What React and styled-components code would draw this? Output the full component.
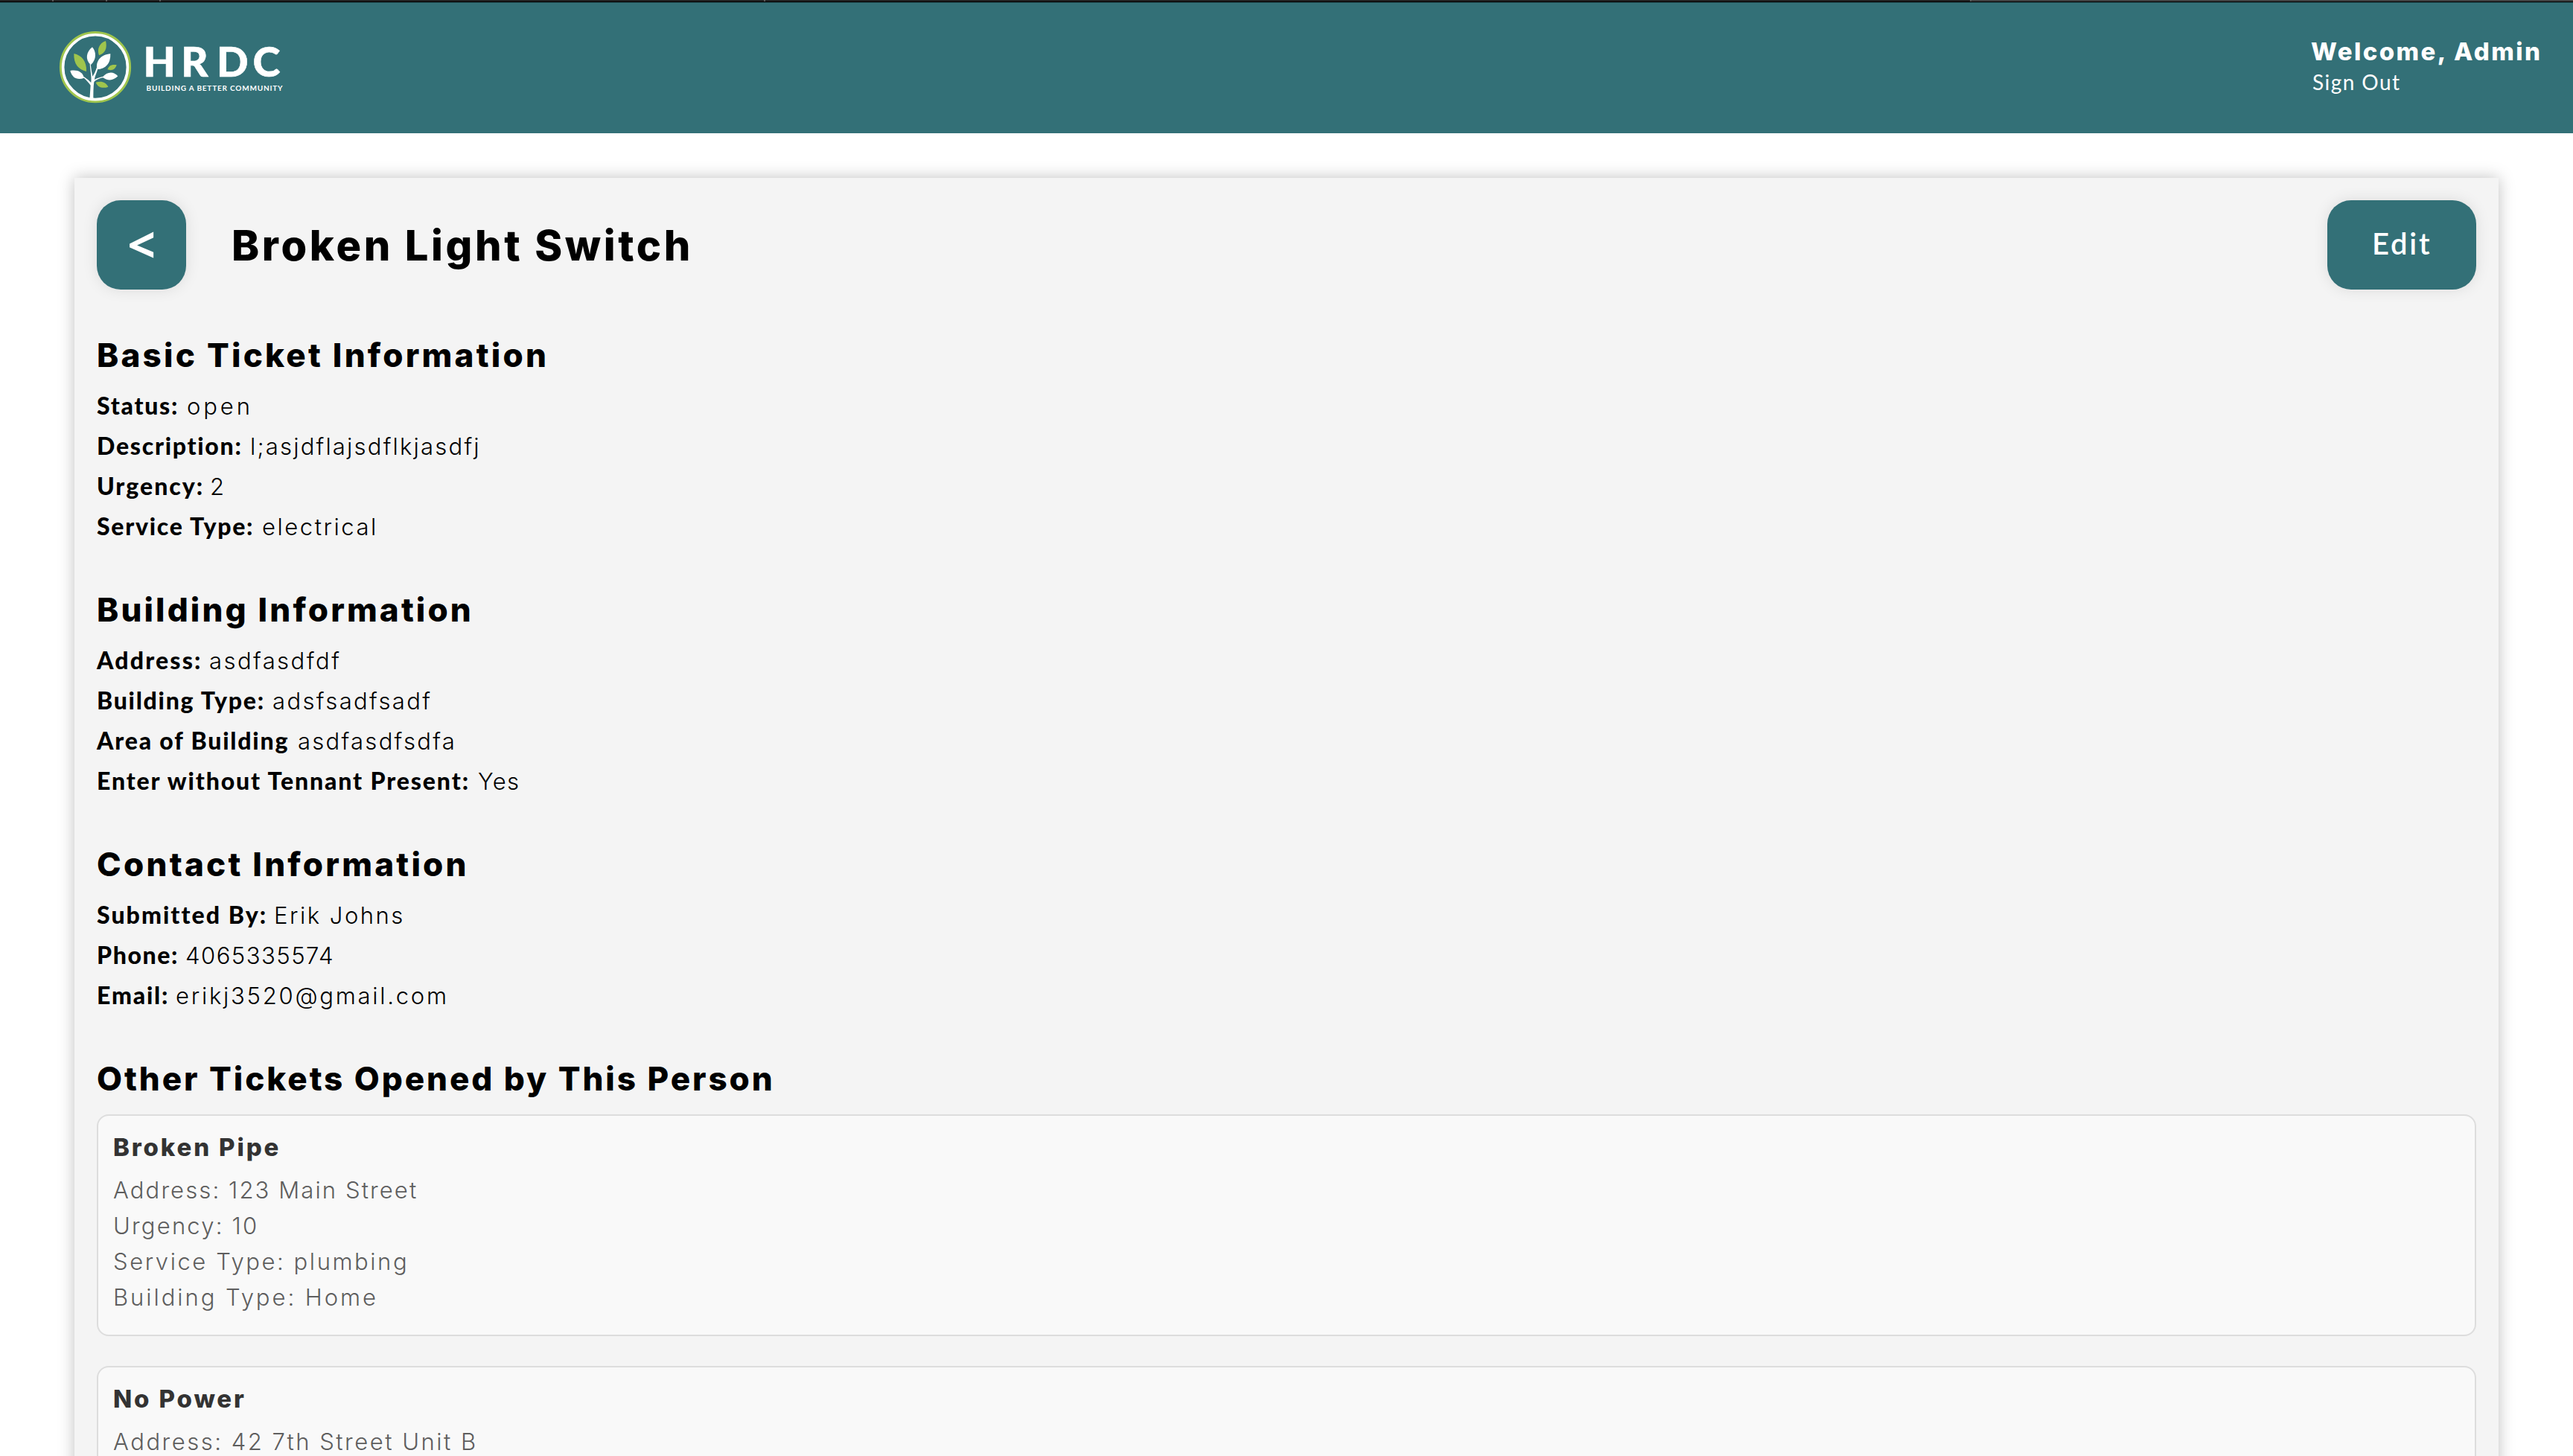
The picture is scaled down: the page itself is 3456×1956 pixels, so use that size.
import React from "react";
import styled, { createGlobalStyle } from "styled-components";

const TEAL = "#337077";
const HEADING = 'Inter, "Liberation Sans", sans-serif';
const LABEL = 'Lato, "Liberation Sans", sans-serif';

const GlobalStyle = createGlobalStyle`
  * { box-sizing: border-box; }
  html, body { margin: 0; background: #fff; }
  body { font-family: ${HEADING}; color: #000; }
  h1, h2, h3, p { margin: 0; }
  button { border: 0; margin: 0; }
`;

const Page = styled.div`
  display: flex;
  flex-direction: column;
  height: 1956px;
  overflow: hidden;
`;

const TabStrip = styled.div`
  display: flex;
  flex: none;
  height: 3px;
  background: #222;
  border-bottom: 1px solid #000;
`;

const Tab = styled.div`
  width: ${(p) => p.$width}px;
  background: ${(p) => (p.$light ? "#404040" : "#222")};
  border-right: 2px solid #5a5a5a;
  &:last-child { border-right: 0; }
`;

const Header = styled.header`
  display: flex;
  flex: none;
  justify-content: space-between;
  align-items: flex-start;
  height: 176px;
  padding: 32px 0 0 64px;
  background: ${TEAL};
  border-top: 1px solid #285a60;
`;

const Logo = styled.svg`
  width: 330px;
  height: 110px;
`;

const User = styled.div`
  width: 352px;
  padding-top: 13px;
  color: #fff;
`;

const Welcome = styled.div`
  font: 800 33px/40px ${HEADING};
  letter-spacing: 2.4px;
  white-space: nowrap;
`;

const SignOut = styled.div`
  margin: 4px 0 0 2px;
  font: 400 28px/34px ${LABEL};
  letter-spacing: 1.44px;
`;

const Panel = styled.main`
  flex: none;
  margin: 60px 100px 0;
  padding: 30px;
  background: #f4f4f4;
  box-shadow: 0 0 20px rgba(0, 0, 0, 0.25);
`;

const TitleBar = styled.div`
  display: flex;
  align-items: center;
  height: 120px;
  margin-bottom: 62px;
`;

const Button = styled.button`
  display: flex;
  align-items: center;
  height: 120px;
  border-radius: 32px;
  background: ${TEAL};
  color: #fff;
  box-shadow: 0 0 20px rgba(0, 0, 0, 0.1);
`;

const BackButton = styled(Button)`
  justify-content: center;
  width: 120px;
  padding: 0 0 4px;
  font: 700 66px/80px "Open Sans", "Noto Sans", sans-serif;
`;

const EditButton = styled(Button)`
  width: 200px;
  margin-left: auto;
  padding: 0 0 4px 60px;
  font: 600 40px/46px ${LABEL};
  letter-spacing: 2.76px;
`;

const Title = styled.h1`
  padding: 2px 0 0 61px;
  font: 800 56px/66px ${HEADING};
  letter-spacing: 3.65px;
`;

const Section = styled.section`
  margin-bottom: 59px;
`;

const SectionTitle = styled.h2`
  height: 52px;
  margin: 0 0 ${(p) => p.$gap}px;
  font: 800 44px/52px ${HEADING};
  letter-spacing: ${(p) => p.$track}px;
`;

const Field = styled.div`
  display: flex;
  align-items: baseline;
  height: 54px;
  line-height: 54px;
  white-space: nowrap;
`;

const FieldName = styled.span`
  flex: none;
  width: ${(p) => p.$width}px;
  font-family: ${LABEL};
  font-size: 32px;
  font-weight: 900;
  letter-spacing: ${(p) => p.$track}px;
`;

const FieldValue = styled.span`
  font-size: 31px;
  font-weight: 300;
  letter-spacing: ${(p) => p.$track}px;
`;

const Ticket = styled.article`
  height: 298px;
  margin-bottom: 40px;
  padding: 22px 20px 26px;
  border: 2px solid #ddd;
  border-radius: 16px;
  background: #f9f9f9;
`;

const TicketTitle = styled.h3`
  margin-bottom: 14px;
  font: 800 33px/40px ${HEADING};
  letter-spacing: 2.85px;
  color: #333;
`;

const TicketLine = styled.p`
  font: 300 31px/48px ${HEADING};
  letter-spacing: ${(p) => p.$track}px;
  color: #5e5e5e;
`;

const sections = [
  {
    title: "Basic Ticket Information",
    track: 3.22,
    fields: [
      ["Status:", 1.75, 121, "open", 3.9],
      ["Description:", 1.73, 206, "l;asjdflajsdflkjasdfj", 2.21],
      ["Urgency:", 2, 152, "2", 0],
      ["Service Type:", 1.73, 222, "electrical", 2.55],
    ],
  },
  {
    title: "Building Information",
    track: 3.14,
    fields: [
      ["Address:", 2.17, 151, "asdfasdfdf", 2.44],
      ["Building Type:", 1.75, 236, "adsfsadfsadf", 2.39],
      ["Area of Building", 1.82, 270, "asdfasdfsdfa", 2.29],
      ["Enter without Tennant Present:", 1.88, 512, "Yes", 1.43],
    ],
  },
  {
    title: "Contact Information",
    track: 3.24,
    fields: [
      ["Submitted By:", 2.06, 238, "Erik Johns", 2.52],
      ["Phone:", 1.61, 119, "4065335574", 1.5],
      ["Email:", 1.82, 106, "erikj3520@gmail.com", 2.75],
    ],
  },
];

const tickets = [
  {
    title: "Broken Pipe",
    lines: [
      ["Address: 123 Main Street", 2.11],
      ["Urgency: 10", 2.2],
      ["Service Type: plumbing", 2.56],
      ["Building Type: Home", 2.95],
    ],
  },
  {
    title: "No Power",
    lines: [["Address: 42 7th Street Unit B", 2.52]],
  },
];

function HrdcLogo() {
  return (
    <Logo viewBox="0 0 330 110">
      <circle cx="64" cy="54.2" r="46.4" fill="none" stroke="#9fc54d" strokeWidth="3.4" />
      <circle cx="64" cy="54.2" r="43.4" fill="none" stroke="#fff" strokeWidth="3.6" />
      <g transform="scale(0.33333)">
        <g fill="#fff">
          <path d="M180 82C196 100 198 132 174 153C150 135 155 100 180 82Z" />
          <path d="M253 109C254 148 235 170 199 172C192 138 215 112 253 109Z" />
          <path d="M91 177C118 172 140 180 147 206C120 217 98 205 91 177Z" />
          <path d="M283 199C262 220 240 217 221 203C240 180 265 178 283 199Z" />
          <path d="M169 294L173 236C167 226 157 216 143 203L147 202C160 211 168 218 175 225C178 200 171 176 170 148L173 148C175 168 178 184 181 200C188 190 193 180 197 166L202 167C199 185 190 197 189 213C200 206 212 203 224 200L225 204C208 208 194 213 187 222C184 242 184 270 184 294Z" />
        </g>
        <g fill="#9fc54d">
          <path d="M106 108C136 114 158 138 156 180C125 173 104 150 106 108Z" />
          <path d="M234 57C241 87 232 106 207 115C198 90 208 66 234 57Z" />
          <path d="M278 154C272 173 258 178 241 172C247 155 260 150 278 154Z" />
          <path d="M194 224C215 217 235 222 244 242C222 250 203 245 194 224Z" />
        </g>
      </g>
      <text x="128.5 179.3 227 275.5" y="66.7" fill="#fff" stroke="#fff" strokeWidth="0.6" fontFamily="Lato, sans-serif" fontWeight="900" fontSize="56">HRDC</text>
      <text x="132.6" y="85.6" textLength="183" fill="#fff" fontFamily="Lato, sans-serif" fontWeight="700" fontSize="10">BUILDING A BETTER COMMUNITY</text>
    </Logo>
  );
}

export default function App() {
  return (
    <Page>
      <GlobalStyle />
      <TabStrip>
        <Tab $width={72} />
        <Tab $width={72} />
        <Tab $width={72} />
        <Tab $width={812} />
        <Tab $width={1620} />
        <Tab $width={808} $light />
      </TabStrip>
      <Header>
        <HrdcLogo />
        <User>
          <Welcome>Welcome, Admin</Welcome>
          <SignOut>Sign Out</SignOut>
        </User>
      </Header>
      <Panel>
        <TitleBar>
          <BackButton>&lt;</BackButton>
          <Title>Broken Light Switch</Title>
          <EditButton>Edit</EditButton>
        </TitleBar>
        {sections.map((s) => (
          <Section key={s.title}>
            <SectionTitle $track={s.track} $gap={15}>{s.title}</SectionTitle>
            {s.fields.map(([name, nameTrack, width, value, track]) => (
              <Field key={name}>
                <FieldName $width={width} $track={nameTrack}>{name}</FieldName>
                <FieldValue $track={track}>{value}</FieldValue>
              </Field>
            ))}
          </Section>
        ))}
        <SectionTitle $track={2.93} $gap={22}>Other Tickets Opened by This Person</SectionTitle>
        {tickets.map((t) => (
          <Ticket key={t.title}>
            <TicketTitle>{t.title}</TicketTitle>
            {t.lines.map(([text, track]) => (
              <TicketLine key={text} $track={track}>{text}</TicketLine>
            ))}
          </Ticket>
        ))}
      </Panel>
    </Page>
  );
}
